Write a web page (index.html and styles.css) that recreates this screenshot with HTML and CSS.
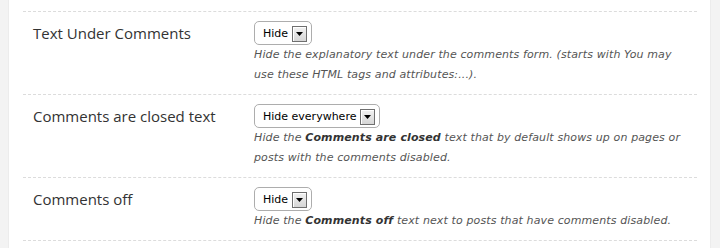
FILE: index.html
```html
<!DOCTYPE html>
<html>
<head>
<meta charset="utf-8">
<link rel="stylesheet" href="styles.css">
</head>
<body>
<div class="page">
  <div class="side side-left"></div>
  <main class="panel">
    <div class="row">
      <div class="label">Text Under Comments</div>
      <div class="field">
        <div class="select"><span class="value">Hide</span><span class="arrow"><svg width="7" height="4" viewBox="0 0 7 4"><path d="M0 0H7L3.5 4Z" fill="#000"/></svg></span></div>
        <p class="desc">Hide the explanatory text under the comments form. (starts with You may<br>use these HTML tags and attributes:...).</p>
      </div>
    </div>
    <div class="row">
      <div class="label">Comments are closed text</div>
      <div class="field">
        <div class="select"><span class="value">Hide everywhere</span><span class="arrow"><svg width="7" height="4" viewBox="0 0 7 4"><path d="M0 0H7L3.5 4Z" fill="#000"/></svg></span></div>
        <p class="desc">Hide the <b>Comments are closed</b> text that by default shows up on pages or<br>posts with the comments disabled.</p>
      </div>
    </div>
    <div class="row">
      <div class="label">Comments off</div>
      <div class="field">
        <div class="select"><span class="value">Hide</span><span class="arrow"><svg width="7" height="4" viewBox="0 0 7 4"><path d="M0 0H7L3.5 4Z" fill="#000"/></svg></span></div>
        <p class="desc">Hide the <b>Comments off</b> text next to posts that have comments disabled.</p>
      </div>
    </div>
    <div class="end"></div>
  </main>
  <div class="side side-right"></div>
</div>
</body>
</html>
```
FILE: styles.css
```css
html, body {
  margin: 0;
  padding: 0;
  background: #ffffff;
}
.page {
  display: flex;
  width: 720px;
  height: 248px;
  overflow: hidden;
}
.side {
  background: #f3f3f3;
}
.side-left {
  width: 9px;
  border-right: 1px solid #ececec;
  box-sizing: border-box;
}
.side-right {
  width: 10px;
  border-left: 1px solid #ececec;
  box-sizing: border-box;
}
.panel {
  flex: 1;
  background: #ffffff;
  padding: 11px 13px 0 14px;
}
.row {
  display: grid;
  grid-template-columns: 221px 1fr;
  padding: 9px 0 9px 10px;
  border-top: 1px dashed #dcdcdc;
}
.end {
  border-top: 1px dashed #dcdcdc;
}
.label {
  font-family: "Open Sans", "Noto Sans", sans-serif;
  font-size: 15px;
  line-height: 24px;
  color: #333333;
}
.field {
  display: flex;
  flex-direction: column;
  align-items: flex-start;
}
.select {
  display: flex;
  align-items: center;
  height: 24px;
  box-sizing: border-box;
  border: 1px solid #adadad;
  border-radius: 5px;
  background: #ffffff;
  padding: 0 4px 0 8px;
}
.value {
  font-family: "DejaVu Sans", Verdana, sans-serif;
  font-size: 11px;
  color: #000000;
  margin-right: 4px;
}
.arrow {
  display: flex;
  align-items: center;
  justify-content: center;
  width: 15px;
  height: 16px;
  margin-top: 2px;
  box-sizing: border-box;
  border: 1px solid #6f6f6f;
  box-shadow: inset 1px 1px 0 #ffffff;
  background: linear-gradient(#f2f2f2, #d6d6d6);
}
.arrow svg {
  display: block;
}
.desc {
  margin: 0;
  font-family: "DejaVu Sans", Verdana, sans-serif;
  font-size: 11px;
  font-style: italic;
  letter-spacing: 0.12px;
  line-height: 20px;
  color: #555555;
}
.desc b {
  color: #333333;
  font-weight: bold;
}
```
